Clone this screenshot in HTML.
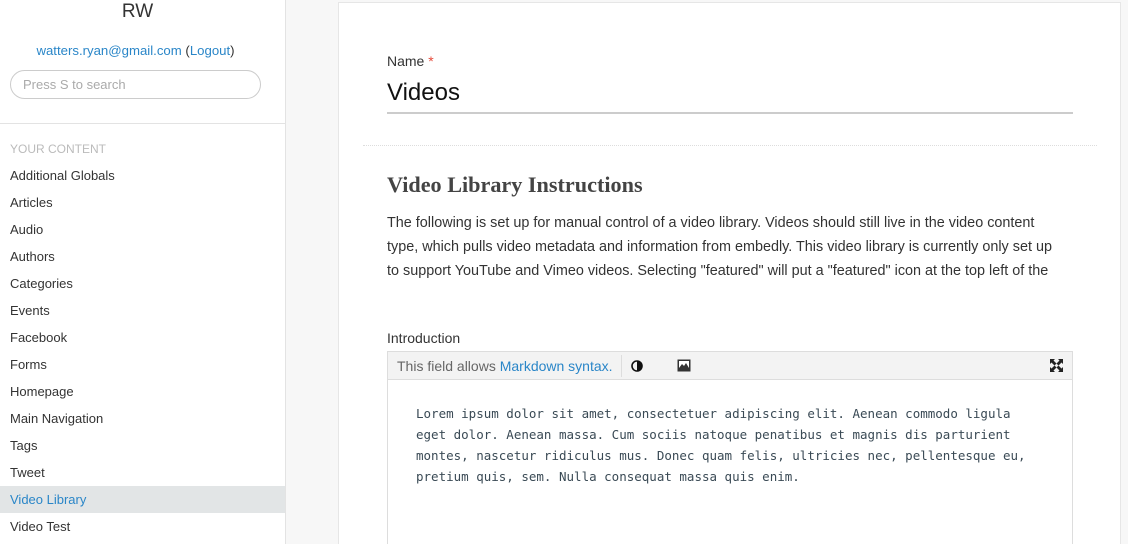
<!DOCTYPE html>
<html style="height:544px;overflow:hidden"><head><meta charset="utf-8"><style>
*{margin:0;padding:0;box-sizing:border-box}
body{width:1128px;height:544px;overflow:hidden;background:#f7f7f7;font-family:"Liberation Sans",sans-serif;position:relative;color:#333}
#side{position:absolute;left:0;top:0;width:286px;height:544px;background:#fff;border-right:1px solid #e3e3e3}
.a{position:absolute;white-space:nowrap}
.nav{position:absolute;left:0;width:285px;height:27px;line-height:27px;padding-left:10px;font-size:13px;color:#333}
#main{position:absolute;left:338px;top:2px;width:783px;height:542px;background:#fff;border:1px solid #e6e6e6;border-bottom:none}
</style></head><body>
<div id="side">
<div class="a" style="left:0;width:275px;text-align:center;top:1px;font-size:19px;color:#333">RW</div>
<div class="a" style="left:0;width:271px;text-align:center;top:43px;font-size:13.2px;color:#333"><span style="color:#2a86c8">watters.ryan@gmail.com</span> (<span style="color:#2a86c8">Logout</span>)</div>
<div class="a" style="left:10px;top:70px;width:251px;height:29px;border:1px solid #ccc;border-radius:15px;font-size:13px;color:#aaa;line-height:27px;padding-left:12px">Press S to search</div>
<div class="a" style="left:0;top:123px;width:285px;border-top:1px solid #e3e3e3"></div>
<div class="a" style="left:10px;top:142px;font-size:12px;color:#bbb">YOUR CONTENT</div>
<div class="nav" style="top:162px">Additional Globals</div>
<div class="nav" style="top:189px">Articles</div>
<div class="nav" style="top:216px">Audio</div>
<div class="nav" style="top:243px">Authors</div>
<div class="nav" style="top:270px">Categories</div>
<div class="nav" style="top:297px">Events</div>
<div class="nav" style="top:324px">Facebook</div>
<div class="nav" style="top:351px">Forms</div>
<div class="nav" style="top:378px">Homepage</div>
<div class="nav" style="top:405px">Main Navigation</div>
<div class="nav" style="top:432px">Tags</div>
<div class="nav" style="top:459px">Tweet</div>
<div class="nav" style="top:486px;background:#e2e5e6;color:#2a86c8">Video Library</div>
<div class="nav" style="top:513px">Video Test</div>
</div>
<div id="main"></div>
<div class="a" style="left:387px;top:53px;font-size:14px;color:#333">Name <span style="color:#e74c3c">*</span></div>
<div class="a" style="left:387px;top:79px;font-size:24px;color:#111">Videos</div>
<div class="a" style="left:387px;top:112px;width:686px;height:2px;background:#ccc"></div>
<div class="a" style="left:363px;top:145px;width:734px;border-top:1px dotted #ddd"></div>
<div class="a" style="left:387px;top:172px;font-size:22.2px;font-weight:bold;font-family:'Liberation Serif',serif;color:#444">Video Library Instructions</div>
<div class="a" style="left:387px;top:211px;font-size:14.4px;line-height:24px;color:#333;white-space:normal;width:720px">The following is set up for manual control of a video library. Videos should still live in the video content<br>type, which pulls video metadata and information from embedly. This video library is currently only set up<br>to support YouTube and Vimeo videos. Selecting "featured" will put a "featured" icon at the top left of the</div>
<div class="a" style="left:387px;top:330px;font-size:14px;color:#333">Introduction</div>
<div class="a" style="left:387px;top:351px;width:686px;height:200px;border:1px solid #ddd;background:#fff"></div>
<div class="a" style="left:388px;top:352px;width:684px;height:28px;background:#f3f3f3;border-bottom:1px solid #ddd"></div>
<div class="a" style="left:397px;top:358px;font-size:14px;color:#666">This field allows <span style="color:#2a86c8">Markdown syntax.</span></div>
<div class="a" style="left:621px;top:355px;width:1px;height:22px;background:#ddd"></div>
<svg class="a" style="left:631px;top:360px" width="12" height="12" viewBox="0 0 12 12"><circle cx="6" cy="6" r="5" fill="none" stroke="#111" stroke-width="1.6"/><path d="M6 1A5 5 0 0 1 6 11Z" fill="#111"/></svg>
<svg class="a" style="left:677px;top:359px" width="14" height="13" viewBox="0 0 14 13"><rect x="0.5" y="0.5" width="13" height="12" fill="#333"/><rect x="2" y="2" width="10" height="7" fill="#fff"/><path d="M2 9L5 5L7 7L9 4L12 9Z" fill="#333"/></svg>
<svg class="a" style="left:1050px;top:359px" width="13" height="13" viewBox="0 0 13 13" fill="#222"><path d="M0 0H5L3.5 1.5L6.5 4.5L4.5 6.5L1.5 3.5L0 5Z"/><path d="M13 0V5L11.5 3.5L8.5 6.5L6.5 4.5L9.5 1.5L8 0Z"/><path d="M0 13V8L1.5 9.5L4.5 6.5L6.5 8.5L3.5 11.5L5 13Z"/><path d="M13 13H8L9.5 11.5L6.5 8.5L8.5 6.5L11.5 9.5L13 8Z"/></svg>
<div class="a" style="left:416px;top:403px;font-family:'DejaVu Sans Mono','Liberation Mono',monospace;font-size:12.5px;line-height:21px;color:#3a4a55">Lorem ipsum dolor sit amet, consectetuer adipiscing elit. Aenean commodo ligula<br>eget dolor. Aenean massa. Cum sociis natoque penatibus et magnis dis parturient<br>montes, nascetur ridiculus mus. Donec quam felis, ultricies nec, pellentesque eu,<br>pretium quis, sem. Nulla consequat massa quis enim.</div>
</body></html>
